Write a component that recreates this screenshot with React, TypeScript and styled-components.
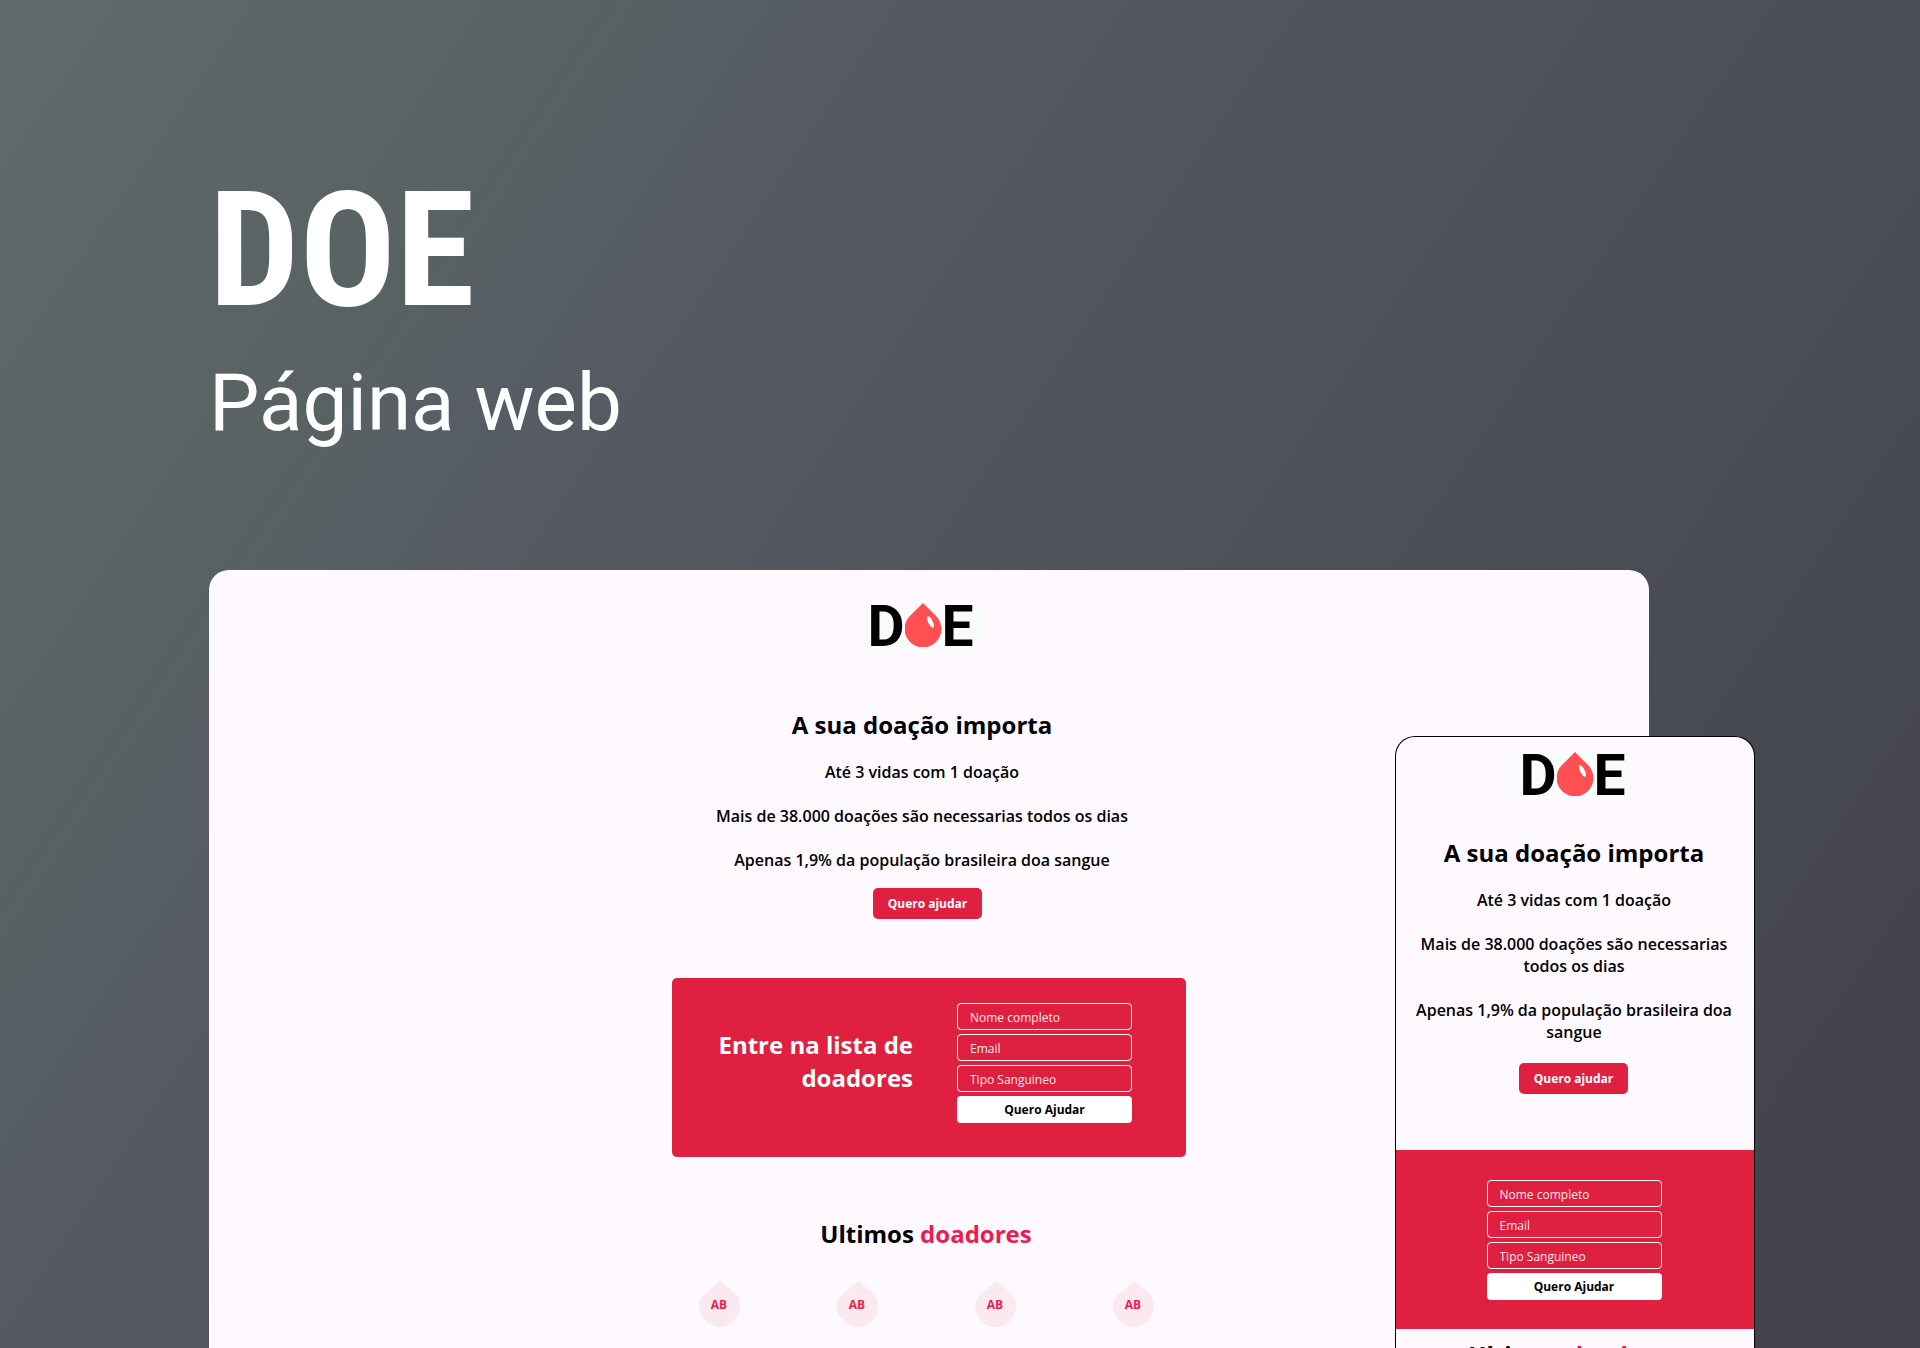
import React from "react";
import styled, { createGlobalStyle, css } from "styled-components";

const color = {
  paper: "#fdf9ff",
  ink: "#000000",
  red: "#df2040",
  rose: "#ee1c4e",
  blush: "#faeaf0",
};

const GlobalStyle = createGlobalStyle`
  *, *::before, *::after { box-sizing: border-box; }
  body { margin: 0; font-family: "Open Sans", "Noto Sans", sans-serif; color: ${color.ink}; }
  h1, h2, h3, p, ul { margin: 0; padding: 0; }
`;

const Stage = styled.main`
  display: flex;
  flex-direction: column;
  height: 100vh;
  overflow: hidden;
  background: linear-gradient(
    124deg,
    #606a6b 0%,
    #586262 21%,
    #575d65 26%,
    #545760 38%,
    #4b4e57 68%,
    #464952 82%,
    #45454f 87%,
    #42414d 100%
  );
`;

const Cover = styled.header`
  padding: 155px 209px 0;
  color: #ffffff;
`;

const Brand = styled.h1`
  font: 700 160px/192px "Roboto Condensed", Roboto, sans-serif;
`;

const Kind = styled.p`
  margin-top: 8px;
  font: 400 80px/96px Roboto, sans-serif;
`;

const Showcase = styled.div`
  position: relative;
  flex: 1;
  display: flex;
  margin: 119px 165px 0 209px;
`;

const Desktop = styled.section`
  flex: 1;
  margin-right: 106px;
  padding-top: 33px;
  border-radius: 20px 20px 0 0;
  background: ${color.paper};
`;

const Phone = styled.section`
  position: absolute;
  top: 166px;
  right: 0;
  bottom: 0;
  width: 360px;
  padding-top: 15px;
  border: solid ${color.ink};
  border-width: 1px 1px 0;
  border-radius: 20px 20px 0 0;
  background: ${color.paper};
  overflow: hidden;
`;

const Intro = styled.div<{ $compact?: boolean }>`
  display: flex;
  flex-direction: column;
  align-items: center;
  text-align: center;
  gap: ${(p) => (p.$compact ? 40 : 61)}px;
  padding: ${(p) => (p.$compact ? "0 20px 0 18px" : "0 14px 0 0")};
`;

const LogoBox = styled.div`
  display: flex;
  align-items: flex-start;
  width: 121px;
  height: 44px;
  padding-left: 6px;
  background: #f9fafa;
  font: 700 57px/48px Roboto, sans-serif;
`;

const Copy = styled.div`
  display: flex;
  flex-direction: column;
  gap: 20px;
`;

const Title = styled.h2<{ $right?: boolean }>`
  font-weight: 700;
  font-size: 24px;
  line-height: 33px;
  ${(p) => p.$right && css`
    flex: 1;
    padding-bottom: 4px;
    text-align: right;
  `}
`;

const Facts = styled.div`
  display: flex;
  flex-direction: column;
  gap: 22px;
  font-weight: 600;
  font-size: 16px;
  line-height: 22px;
`;

const Action = styled.div<{ $compact?: boolean }>`
  display: flex;
  justify-content: center;
  padding: ${(p) => (p.$compact ? "20px 3px 56px 0" : "17px 3px 59px 0")};
`;

const Button = styled.button<{ $light?: boolean }>`
  width: ${(p) => (p.$light ? "100%" : "109px")};
  height: ${(p) => (p.$light ? 27 : 31)}px;
  padding: 0;
  border: 0;
  border-radius: ${(p) => (p.$light ? 4 : 5)}px;
  background: ${(p) => (p.$light ? "#ffffff" : color.red)};
  color: ${(p) => (p.$light ? color.ink : "#ffffff")};
  font: 700 12px/16px "Open Sans", sans-serif;
  cursor: pointer;
`;

const Panel = styled.section<{ $compact?: boolean }>`
  display: flex;
  align-items: center;
  justify-content: center;
  gap: 44px;
  background: ${color.red};
  color: #ffffff;
  ${(p) => p.$compact
    ? css`
        padding: 30px 2px 29px 0;
      `
    : css`
        max-width: 514px;
        margin: 0 auto;
        padding: 25px 54px 34px 40px;
        border-radius: 5px;
      `}
`;

const Form = styled.form`
  display: flex;
  flex-direction: column;
  gap: 4px;
  width: 175px;
`;

const Input = styled.input`
  display: block;
  width: 100%;
  height: 27px;
  padding: 2px 12px 0;
  border: 1px solid #ffffff;
  border-radius: 4px;
  background: transparent;
  color: #ffffff;
  font: 400 12px/16px "Open Sans", sans-serif;
  &::placeholder { color: #ffffff; opacity: 0.9; }
`;

const Donors = styled.section<{ $compact?: boolean }>`
  display: flex;
  flex-direction: column;
  align-items: center;
  gap: 31px;
  padding: ${(p) => (p.$compact ? "9px 2px 0 0" : "60px 6px 0 0")};
`;

const Accent = styled.span`
  color: ${color.rose};
`;

const DonorList = styled.ul`
  display: flex;
  gap: 97px;
  list-style: none;
`;

const Donor = styled.li`
  display: grid;
  width: 41px;
  height: 46px;
  color: ${color.rose};
  font-weight: 700;
  font-size: 12px;
  line-height: 48px;
  text-align: center;
  & > * { grid-area: 1 / 1; }
`;

function Logo() {
  return (
    <LogoBox>
      <span>D</span>
      <svg width="37" height="44" viewBox="0 0 37 44" aria-hidden="true">
        <path d="M18 0 L31.1 13.1 A18.4 18.4 0 1 1 4.9 13.1 Z" fill="#ff4f52" />
        <ellipse cx="25.5" cy="19" rx="2.3" ry="6.2" transform="rotate(-27 25.5 19)" fill="#ffffff" />
      </svg>
      <span>E</span>
    </LogoBox>
  );
}

function Hero({ compact }: { compact?: boolean }) {
  return (
    <>
      <Intro $compact={compact}>
        <Logo />
        <Copy>
          <Title>A sua doação importa</Title>
          <Facts>
            <p>Até 3 vidas com 1 doação</p>
            <p>Mais de 38.000 doações são necessarias todos os dias</p>
            <p>Apenas 1,9% da população brasileira doa sangue</p>
          </Facts>
        </Copy>
      </Intro>
      <Action $compact={compact}>
        <Button type="button">Quero ajudar</Button>
      </Action>
    </>
  );
}

function SignUp({ compact }: { compact?: boolean }) {
  return (
    <Panel $compact={compact}>
      {!compact && <Title $right>Entre na lista de doadores</Title>}
      <Form onSubmit={(e) => e.preventDefault()}>
        {["Nome completo", "Email", "Tipo Sanguineo"].map((name) => (
          <Input
            key={name}
            aria-label={name}
            type={name === "Email" ? "email" : "text"}
            placeholder={name}
          />
        ))}
        <Button $light type="submit">Quero Ajudar</Button>
      </Form>
    </Panel>
  );
}

function LatestDonors({ compact }: { compact?: boolean }) {
  return (
    <Donors $compact={compact}>
      <Title>
        Ultimos <Accent>doadores</Accent>
      </Title>
      {!compact && (
        <DonorList>
          {["AB", "AB", "AB", "AB"].map((type, i) => (
            <Donor key={i}>
              <svg width="41" height="46" viewBox="0 0 41 46" aria-hidden="true">
                <path
                  d="M21.5 0 L35 11.5 C39 15 41 20 41 25 C40.5 37 32 46 21 46 C9 46 0 36 0 24 C0.5 19 3 15 7 12 Z"
                  fill={color.blush}
                />
              </svg>
              <span>{type}</span>
            </Donor>
          ))}
        </DonorList>
      )}
    </Donors>
  );
}

export default function App() {
  return (
    <>
      <GlobalStyle />
      <Stage>
        <Cover>
          <Brand>DOE</Brand>
          <Kind>Página web</Kind>
        </Cover>
        <Showcase>
          <Desktop>
            <Hero />
            <SignUp />
            <LatestDonors />
          </Desktop>
          <Phone>
            <Hero compact />
            <SignUp compact />
            <LatestDonors compact />
          </Phone>
        </Showcase>
      </Stage>
    </>
  );
}
